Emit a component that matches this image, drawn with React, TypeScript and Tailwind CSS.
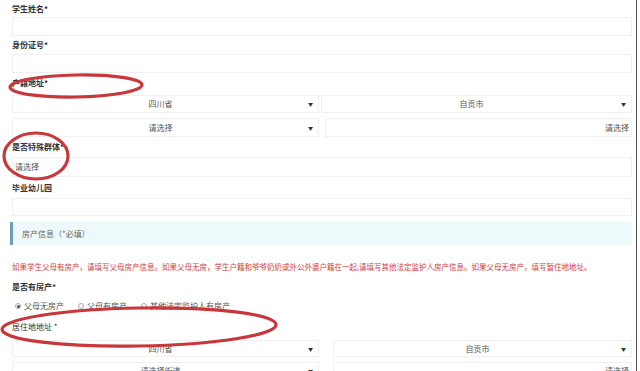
import React from 'react';

const font = { fontFamily: '"Noto Sans CJK SC", "Noto Sans", sans-serif' };

function Label({ text, h, bold = true }: { text: string; h: string; bold?: boolean }) {
  return (
    <div className={`${h} flex items-center text-[8px] text-[#333] ${bold ? 'font-bold' : ''}`}>{text}</div>
  );
}

function Input({ h, placeholder }: { h: string; placeholder?: string }) {
  return (
    <div className={`${h} w-[620px] border border-[#f0f0f0] flex items-center px-[2px] text-[8px] text-[#555]`}>
      {placeholder}
    </div>
  );
}

function Select({ text, w, align = 'center', arrow = true }: { text: string; w: string; align?: 'center' | 'right'; arrow?: boolean }) {
  return (
    <div className={`${w} h-full border border-[#f0f0f0] flex items-center relative text-[8px] text-[#555]`}>
      <span className={`flex-1 ${align === 'center' ? 'text-center' : 'text-right pr-[2px]'}`}>{text}</span>
      {arrow && <span className="text-[5px] text-[#333] pr-[5px]">▼</span>}
    </div>
  );
}

function Radio({ checked, text }: { checked?: boolean; text: string }) {
  return (
    <div className="flex items-center gap-[3px]">
      <span className="w-[6px] h-[6px] rounded-full border border-[#aaa] flex items-center justify-center">
        {checked && <span className="w-[3px] h-[3px] rounded-full bg-[#555]" />}
      </span>
      <span>{text}</span>
    </div>
  );
}

export default function App() {
  return (
    <div className="w-[640px] h-[371px] overflow-hidden bg-white relative" style={font}>
      <div className="w-[637px] h-full border-r border-[#555] pl-[12px]">
        <Label text="学生姓名*" h="h-[17px]" />
        <Input h="h-[19px]" />
        <Label text="身份证号*" h="h-[18px]" />
        <Input h="h-[19px]" />
        <Label text="户籍地址*" h="h-[20px]" />
        <div className="mt-[2px] h-[18px] flex">
          <Select text="四川省" w="w-[307px]" />
          <div className="w-[2px]" />
          <Select text="自贡市" w="w-[311px]" />
        </div>
        <div className="mt-[5px] h-[19px] flex">
          <Select text="请选择" w="w-[307px]" />
          <div className="w-[6px]" />
          <Select text="请选择" w="w-[307px]" align="right" arrow={false} />
        </div>
        <Label text="是否特殊群体*" h="h-[20px]" />
        <Input h="h-[20px]" placeholder="请选择" />
        <Label text="毕业幼儿园" h="h-[21px]" />
        <Input h="h-[18px]" />
        <div className="mt-[6px] h-[23px] w-[622px] -ml-[2px] bg-[#eef9fb] border-l-[3px] border-[#6f9dbd] flex items-center pl-[9px] text-[8px] text-[#666]">
          房产信息（*必填）
        </div>
        <div className="mt-[15px] h-[14px] flex items-center text-[7.5px] text-[#d2403f] whitespace-nowrap">
          如果学生父母有房产，请填写父母房产信息。如果父母无房，学生户籍和爷爷奶奶或外公外婆户籍在一起,请填写其他法定监护人房产信息。如果父母无房产，填写暂住地地址。
        </div>
        <Label text="是否有房产*" h="mt-[6px] h-[14px]" />
        <div className="mt-[5px] h-[14px] flex items-center gap-[14px] pl-[3px] text-[8px] text-[#555]">
          <Radio checked text="父母无房产" />
          <Radio text="父母有房产" />
          <Radio text="其他法定监护人有房产" />
        </div>
        <Label text="居住地地址 *" h="mt-[7px] h-[14px]" bold={false} />
        <div className="mt-[6px] h-[17px] flex">
          <Select text="四川省" w="w-[307px]" />
          <div className="w-[14px]" />
          <Select text="自贡市" w="w-[299px]" />
        </div>
        <div className="mt-[5px] h-[18px] flex">
          <Select text="请选择街道" w="w-[307px]" />
          <div className="w-[14px]" />
          <Select text="请选择" w="w-[299px]" align="right" arrow={false} />
        </div>
      </div>
      <svg className="absolute inset-0 pointer-events-none" width="640" height="371" viewBox="0 0 640 371">
        <g fill="none" stroke="#c8373a" strokeWidth="3.2">
          <ellipse cx="76" cy="86" rx="66" ry="11" transform="rotate(-1 76 86)" />
          <ellipse cx="36" cy="156" rx="32" ry="23" />
          <ellipse cx="139" cy="327" rx="137" ry="19" transform="rotate(-1 139 327)" />
        </g>
      </svg>
    </div>
  );
}
